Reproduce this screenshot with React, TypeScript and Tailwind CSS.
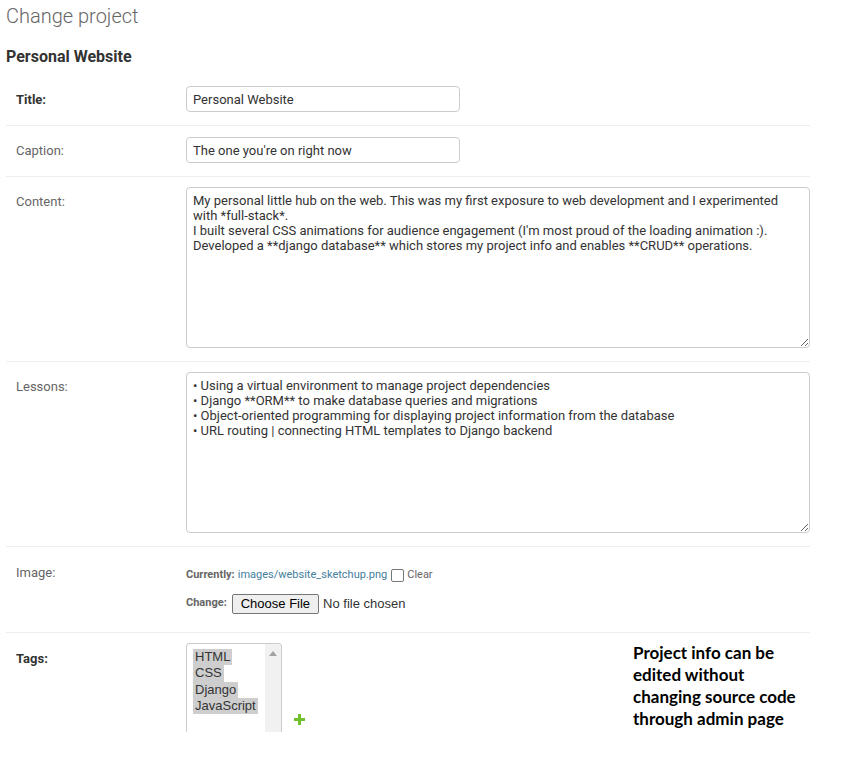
const CONTENT = `My personal little hub on the web. This was my first exposure to web development and I experimented
with *full-stack*.
I built several CSS animations for audience engagement (I'm most proud of the loading animation :).
Developed a **django database** which stores my project info and enables **CRUD** operations.`;

const LESSONS = `• Using a virtual environment to manage project dependencies
• Django **ORM** to make database queries and migrations
• Object-oriented programming for displaying project information from the database
• URL routing | connecting HTML templates to Django backend`;

const TAGS = ["HTML", "CSS", "Django", "JavaScript"];

function Label({ text, required = false, className = "" }: { text: string; required?: boolean; className?: string }) {
  return (
    <label
      className={`w-[170px] shrink-0 pr-[10px] text-[13px] leading-[16px] ${
        required ? "font-bold text-[#333]" : "text-[#666]"
      } ${className}`}
    >
      {text}
    </label>
  );
}

export default function App() {
  return (
    <div className="min-h-[762px] bg-white font-['Roboto',sans-serif] text-[13px] text-[#333]">
      <div className="pl-[6px] pt-[4px]">
        {/* Page title */}
        <h1 className="text-[20px] font-light leading-[24px] text-[#666]">Change project</h1>
        <h2 className="mt-[19px] text-[16px] font-bold leading-[20px] text-[#333]">Personal Website</h2>

        <div className="mt-[8px] w-[804px]">
          {/* Title */}
          <div className="flex border-b border-[#eee] pl-[10px] pt-[11px] pb-[13px]">
            <Label text="Title:" required className="mt-[6px]" />
            <input
              readOnly
              defaultValue="Personal Website"
              className="h-[26px] w-[274px] rounded-[4px] border border-[#ccc] px-[6px] text-[13px] text-[#333] outline-none"
            />
          </div>

          {/* Caption */}
          <div className="flex border-b border-[#eee] pl-[10px] pt-[11px] pb-[13px]">
            <Label text="Caption:" className="mt-[6px]" />
            <input
              readOnly
              defaultValue="The one you're on right now"
              className="h-[26px] w-[274px] rounded-[4px] border border-[#ccc] px-[6px] text-[13px] text-[#333] outline-none"
            />
          </div>

          {/* Content */}
          <div className="flex border-b border-[#eee] pl-[10px] pt-[10px] pb-[13px]">
            <Label text="Content:" className="mt-[7px]" />
            <textarea
              readOnly
              defaultValue={CONTENT}
              className="h-[161px] w-[624px] shrink-0 rounded-[4px] border border-[#ccc] px-[6px] py-[5px] text-[13px] leading-[15px] text-[#333] outline-none"
            />
          </div>

          {/* Lessons */}
          <div className="flex border-b border-[#eee] pl-[10px] pt-[10px] pb-[13px]">
            <Label text="Lessons:" className="mt-[7px]" />
            <textarea
              readOnly
              defaultValue={LESSONS}
              className="h-[161px] w-[624px] shrink-0 rounded-[4px] border border-[#ccc] px-[6px] py-[5px] text-[13px] leading-[15px] text-[#333] outline-none"
            />
          </div>

          {/* Image */}
          <div className="flex h-[86px] border-b border-[#eee] pl-[10px] pt-[10px]">
            <Label text="Image:" className="mt-[8px]" />
            <div className="flex flex-col text-[11px]">
              <p className="mt-[10px] flex items-center leading-[16px] text-[#666]">
                <span className="font-bold">Currently:</span>
                <span className="ml-[3px] text-[#447e9b]">images/website_sketchup.png</span>
                <span className="ml-[4px] h-[13px] w-[13px] rounded-[2px] border border-[#767676] bg-white" />
                <span className="ml-[3px]">Clear</span>
              </p>
              <div className="mt-[11px] flex items-start">
                <span className="mt-[1px] text-[11px] font-bold leading-[16px] text-[#666]">Change:</span>
                <span className="ml-[5px] flex h-[20px] items-center rounded-[2px] border border-[#767676] bg-[#efefef] px-[8px] font-['Liberation_Sans',sans-serif] text-[13px] text-black">
                  Choose File
                </span>
                <span className="ml-[4px] font-['Liberation_Sans',sans-serif] text-[13px] leading-[20px] text-[#333]">
                  No file chosen
                </span>
              </div>
            </div>
          </div>

          {/* Tags */}
          <div className="relative flex pl-[10px] pt-[10px]">
            <Label text="Tags:" required className="mt-[8px]" />
            <div className="flex h-[89px] w-[96px] overflow-hidden rounded-t-[4px] border-x border-t border-[#ccc]">
              <div className="flex-1 pl-[6px] pt-[5px] font-['Liberation_Sans',sans-serif] text-[13px] text-[#333]">
                {TAGS.map((t) => (
                  <div key={t} className="w-fit bg-[#cecece] px-[2px] leading-[16.25px]">
                    {t}
                  </div>
                ))}
              </div>
              <div className="flex w-[16px] justify-center bg-[#f1f1f1] pt-[7px]">
                <svg width="8" height="5" viewBox="0 0 8 5">
                  <path d="M4 0 L8 5 L0 5 Z" fill="#a3a3a3" />
                </svg>
              </div>
            </div>
            <svg className="ml-[12px] mt-[71px]" width="11" height="11" viewBox="0 0 11 11">
              <path d="M4 0h3v4h4v3H7v4H4V7H0V4h4z" fill="#70bf2b" />
            </svg>

            {/* Annotation */}
            <div className="absolute left-[627px] top-[9px] font-['Lato',sans-serif] text-[17px] font-bold leading-[22px] text-black">
              <p>Project info can be</p>
              <p>edited without</p>
              <p>changing source code</p>
              <p>through admin page</p>
            </div>
          </div>
        </div>
      </div>
    </div>
  );
}
